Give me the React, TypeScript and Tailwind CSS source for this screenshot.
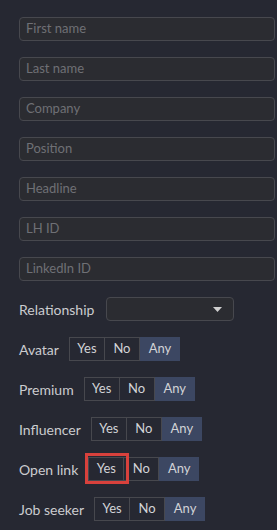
import React from "react";

const inputs = ["First name", "Last name", "Company", "Position", "Headline", "LH ID", "LinkedIn ID"];
const toggles = ["Avatar", "Premium", "Influencer", "Open link", "Job seeker"];

function Seg({ highlight }: { highlight?: boolean }) {
  return (
    <div className="flex h-[24px] text-[13px] text-[#d2d3d7]">
      <div className="relative flex w-[36px] items-center justify-center border border-[#47484e]">
        Yes
        {highlight && (
          <div className="pointer-events-none absolute -left-[4px] -top-[5px] h-[31px] w-[44px] border-[3px] border-[#d8413c]" />
        )}
      </div>
      <div className="flex w-[35px] items-center justify-center border border-l-0 border-[#47484e]">No</div>
      <div className="flex w-[40px] items-center justify-center bg-[#3c4762]">Any</div>
    </div>
  );
}

export default function App() {
  return (
    <div
      className="min-h-[530px] w-[277px] bg-[#262832] pl-[19px] pr-[2px] pt-[17px]"
      style={{ fontFamily: "Lato, 'Open Sans', sans-serif" }}
    >
      <div className="flex flex-col gap-[16px]">
        {inputs.map((p) => (
          <div
            key={p}
            className="flex h-[24px] w-[256px] items-center rounded-[4px] border border-[#47484e] bg-[#2b2c31] px-[6px] text-[13px] text-[#6f7075]"
          >
            {p}
          </div>
        ))}
        <div className="flex h-[24px] items-center gap-[12px]">
          <span className="text-[14px] text-[#cbcccf]">Relationship</span>
          <div className="flex h-[24px] w-[128px] items-center justify-end rounded-[4px] border border-[#47484e] bg-[#2b2c31] pr-[11px]">
            <svg width="9" height="5" viewBox="0 0 9 5">
              <path d="M0 0 H9 L4.5 5 Z" fill="#d0d0d0" />
            </svg>
          </div>
        </div>
        {toggles.map((t) => (
          <div key={t} className="flex h-[24px] items-center gap-[10px]">
            <span className="text-[14px] text-[#cbcccf]">{t}</span>
            <Seg highlight={t === "Open link"} />
          </div>
        ))}
      </div>
    </div>
  );
}
